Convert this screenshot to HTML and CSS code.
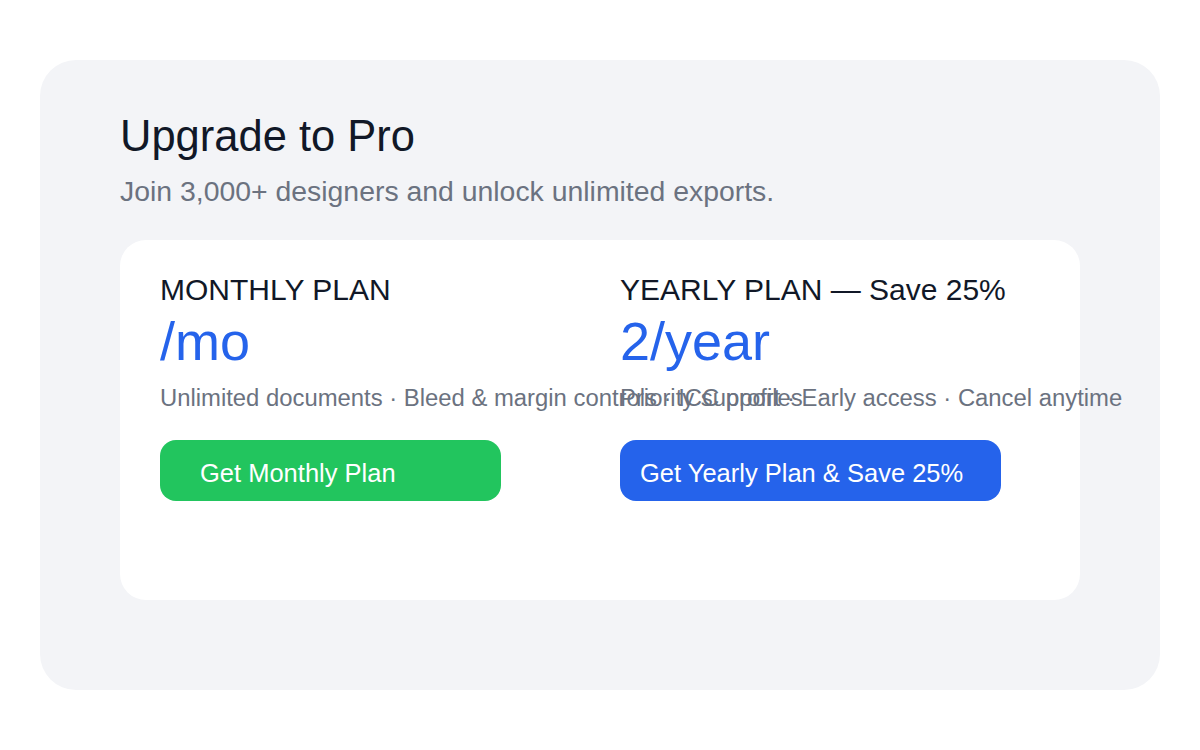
FILE: index.html
```html
<!DOCTYPE html>
<html lang="en">
<head>
<meta charset="utf-8">
<title>Upgrade to Pro</title>
<link rel="stylesheet" href="styles.css">
</head>
<body>
<main class="page">
  <section class="upgrade">
    <h1 class="upgrade-title">Upgrade to Pro</h1>
    <p class="upgrade-sub">Join 3,000+ designers and unlock unlimited exports.</p>
    <div class="plans">
      <div class="plan">
        <div class="plan-name">MONTHLY PLAN</div>
        <div class="plan-price">/mo</div>
        <div class="plan-features">Unlimited documents · Bleed &amp; margin controls · ICC profiles</div>
        <button class="btn btn-monthly">Get Monthly Plan</button>
      </div>
      <div class="plan">
        <div class="plan-name">YEARLY PLAN — Save 25%</div>
        <div class="plan-price">2/year</div>
        <div class="plan-features">Priority support · Early access · Cancel anytime</div>
        <button class="btn btn-yearly">Get Yearly Plan &amp; Save 25%</button>
      </div>
    </div>
  </section>
</main>
</body>
</html>
```

FILE: styles.css
```css
html, body {
  margin: 0;
  padding: 0;
  background: #ffffff;
}

body {
  font-family: "Liberation Sans", Arial, sans-serif;
}

.page {
  padding: 60px 40px;
}

.upgrade {
  background: #f3f4f7;
  border-radius: 36px;
  height: 630px;
  box-sizing: border-box;
  padding: 50px 80px 90px;
}

.upgrade-title {
  margin: 0;
  font-size: 43.5px;
  line-height: 52px;
  font-weight: 400;
  color: #111827;
}

.upgrade-sub {
  margin: 12px 0 0;
  font-size: 28.4px;
  line-height: 34px;
  color: #6b7280;
}

.plans {
  margin-top: 32px;
  background: #ffffff;
  border-radius: 26px;
  height: 360px;
  box-sizing: border-box;
  padding: 32px 40px 0;
  display: grid;
  grid-template-columns: 420px 420px;
  column-gap: 40px;
  align-items: start;
}

.plan {
  display: flex;
  flex-direction: column;
  align-items: flex-start;
}

.plan-name {
  font-size: 30px;
  line-height: 36px;
  color: #111827;
  white-space: nowrap;
}

.plan-price {
  font-size: 54px;
  line-height: 66px;
  color: #2563eb;
  white-space: nowrap;
}

.plan-features {
  margin-top: 9px;
  font-size: 23.85px;
  line-height: 30px;
  color: #6b7280;
  white-space: nowrap;
}

.btn {
  margin-top: 27px;
  border: 0;
  border-radius: 16px;
  height: 61px;
  box-sizing: border-box;
  padding-top: 5px;
  line-height: 56px;
  font-family: "Liberation Sans", Arial, sans-serif;
  font-size: 25.5px;
  color: #ffffff;
  text-align: left;
  white-space: nowrap;
  cursor: pointer;
}

.btn-monthly {
  width: 341px;
  padding-left: 40px;
  background: #22c55e;
}

.btn-yearly {
  width: 381px;
  padding-left: 20px;
  background: #2563eb;
}
```
